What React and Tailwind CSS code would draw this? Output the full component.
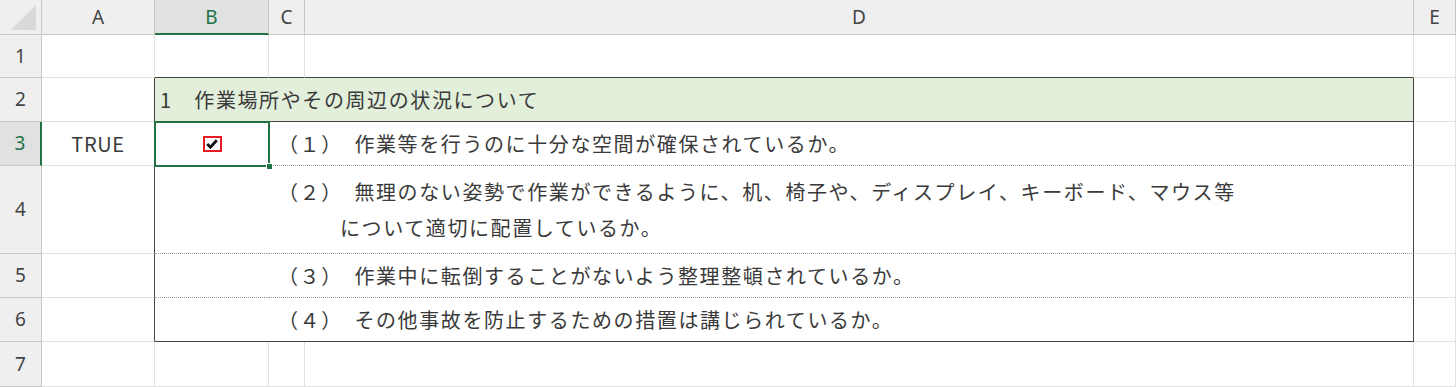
import React from 'react';

const JP = "font-['Noto_Sans_CJK_JP',sans-serif]";

function ColHead({ label, selected }) {
  return (
    <div
      className={
        selected
          ? "flex items-center justify-center bg-[#e1e1e1] border-r border-[#c8c8c8] border-b-2 border-b-[#217346] text-[#217346] text-[19px] font-['Noto_Sans',sans-serif]"
          : "flex items-center justify-center bg-[#efefef] border-r border-b border-[#c8c8c8] text-[#444] text-[19px] font-['Noto_Sans',sans-serif]"
      }
    >
      <span className="pt-[1px]">{label}</span>
    </div>
  );
}

function RowHead({ n, selected }) {
  return (
    <div
      className={
        selected
          ? "flex items-center justify-center bg-[#e1e1e1] border-b border-[#c8c8c8] border-r-2 border-r-[#217346] text-[#217346] text-[19px] font-['Noto_Sans',sans-serif]"
          : "flex items-center justify-center bg-[#efefef] border-r border-b border-[#c8c8c8] text-[#444] text-[19px] font-['Noto_Sans',sans-serif]"
      }
    >
      {n}
    </div>
  );
}

function Cell({ className = '', children }) {
  return <div className={'border-r border-b border-[#e1e1e1] ' + className}>{children}</div>;
}

function Item({ children, last }) {
  return (
    <div
      className={
        last
          ? 'col-span-2 flex flex-col justify-center pl-[9px] border-r border-b border-[#444] text-[20px] tracking-[1.6px] leading-[36px]'
          : 'col-span-2 flex flex-col justify-center pl-[9px] border-r border-b border-r-[#444] border-b-[#9a9a9a] [border-bottom-style:dotted] text-[20px] tracking-[1.6px] leading-[36px]'
      }
    >
      {children}
    </div>
  );
}

export default function App() {
  return (
    <div className={`w-[1456px] h-[387px] overflow-hidden bg-white text-[#3a3a3a] ${JP}`}>
      <div className="grid grid-cols-[42px_113px_114px_36px_1109px_42px] grid-rows-[35px_43px_44px_44px_88px_44px_44px_45px]">
        {/* header */}
        <div className="bg-[#efefef] border-r border-b border-[#c8c8c8] flex items-end justify-end pr-[4px] pb-[3px]">
          <svg width="26" height="26" viewBox="0 0 26 26">
            <polygon points="0,25 25,25 25,0" fill="#d9d9d9" />
          </svg>
        </div>
        <ColHead label="A" />
        <ColHead label="B" selected />
        <ColHead label="C" />
        <ColHead label="D" />
        <ColHead label="E" />

        {/* row 1 */}
        <RowHead n="1" />
        <Cell />
        <Cell className="border-b-[#444]" />
        <Cell className="border-b-[#444]" />
        <Cell className="border-b-[#444]" />
        <Cell />

        {/* row 2 */}
        <RowHead n="2" />
        <Cell className="border-r-[#444]" />
        <div className="col-span-3 flex items-center pl-[5px] bg-[#e2efda] border-r border-b border-[#444] text-[20px] tracking-[1.6px]">
          1　作業場所やその周辺の状況について
        </div>
        <Cell />

        {/* row 3 */}
        <RowHead n="3" selected />
        <Cell className="border-r-[#444] flex items-center justify-center text-[20px] tracking-[0.6px]">TRUE</Cell>
        <div className="relative flex items-center justify-center border-b border-[#9a9a9a] [border-bottom-style:dotted]">
          <div className="w-[19px] h-[16px] border-2 border-[#e61c24] flex items-center justify-center">
            <svg width="12" height="10" viewBox="0 0 12 10">
              <path d="M1.2 5 L4.4 8.2 L10.8 1.2" stroke="#111" strokeWidth="2.8" fill="none" />
            </svg>
          </div>
          <div className="absolute left-[-1px] top-[-1px] right-[-1px] bottom-[-2px] border-2 border-[#217346]" />
          <div className="absolute right-[-4px] bottom-[-5px] w-[7px] h-[7px] bg-[#217346] border border-white" />
        </div>
        <Item>（１）　作業等を行うのに十分な空間が確保されているか。</Item>
        <Cell />

        {/* row 4 */}
        <RowHead n="4" />
        <Cell className="border-r-[#444]" />
        <div className="border-b border-[#9a9a9a] [border-bottom-style:dotted]" />
        <Item>
          <div>（２）　無理のない姿勢で作業ができるように、机、椅子や、ディスプレイ、キーボード、マウス等</div>
          <div className="pl-[62px]">について適切に配置しているか。</div>
        </Item>
        <Cell />

        {/* row 5 */}
        <RowHead n="5" />
        <Cell className="border-r-[#444]" />
        <div className="border-b border-[#9a9a9a] [border-bottom-style:dotted]" />
        <Item>（３）　作業中に転倒することがないよう整理整頓されているか。</Item>
        <Cell />

        {/* row 6 */}
        <RowHead n="6" />
        <Cell className="border-r-[#444]" />
        <div className="border-b border-[#444]" />
        <Item last>（４）　その他事故を防止するための措置は講じられているか。</Item>
        <Cell />

        {/* row 7 */}
        <RowHead n="7" />
        <Cell />
        <Cell />
        <Cell />
        <Cell />
        <Cell />
      </div>
    </div>
  );
}
